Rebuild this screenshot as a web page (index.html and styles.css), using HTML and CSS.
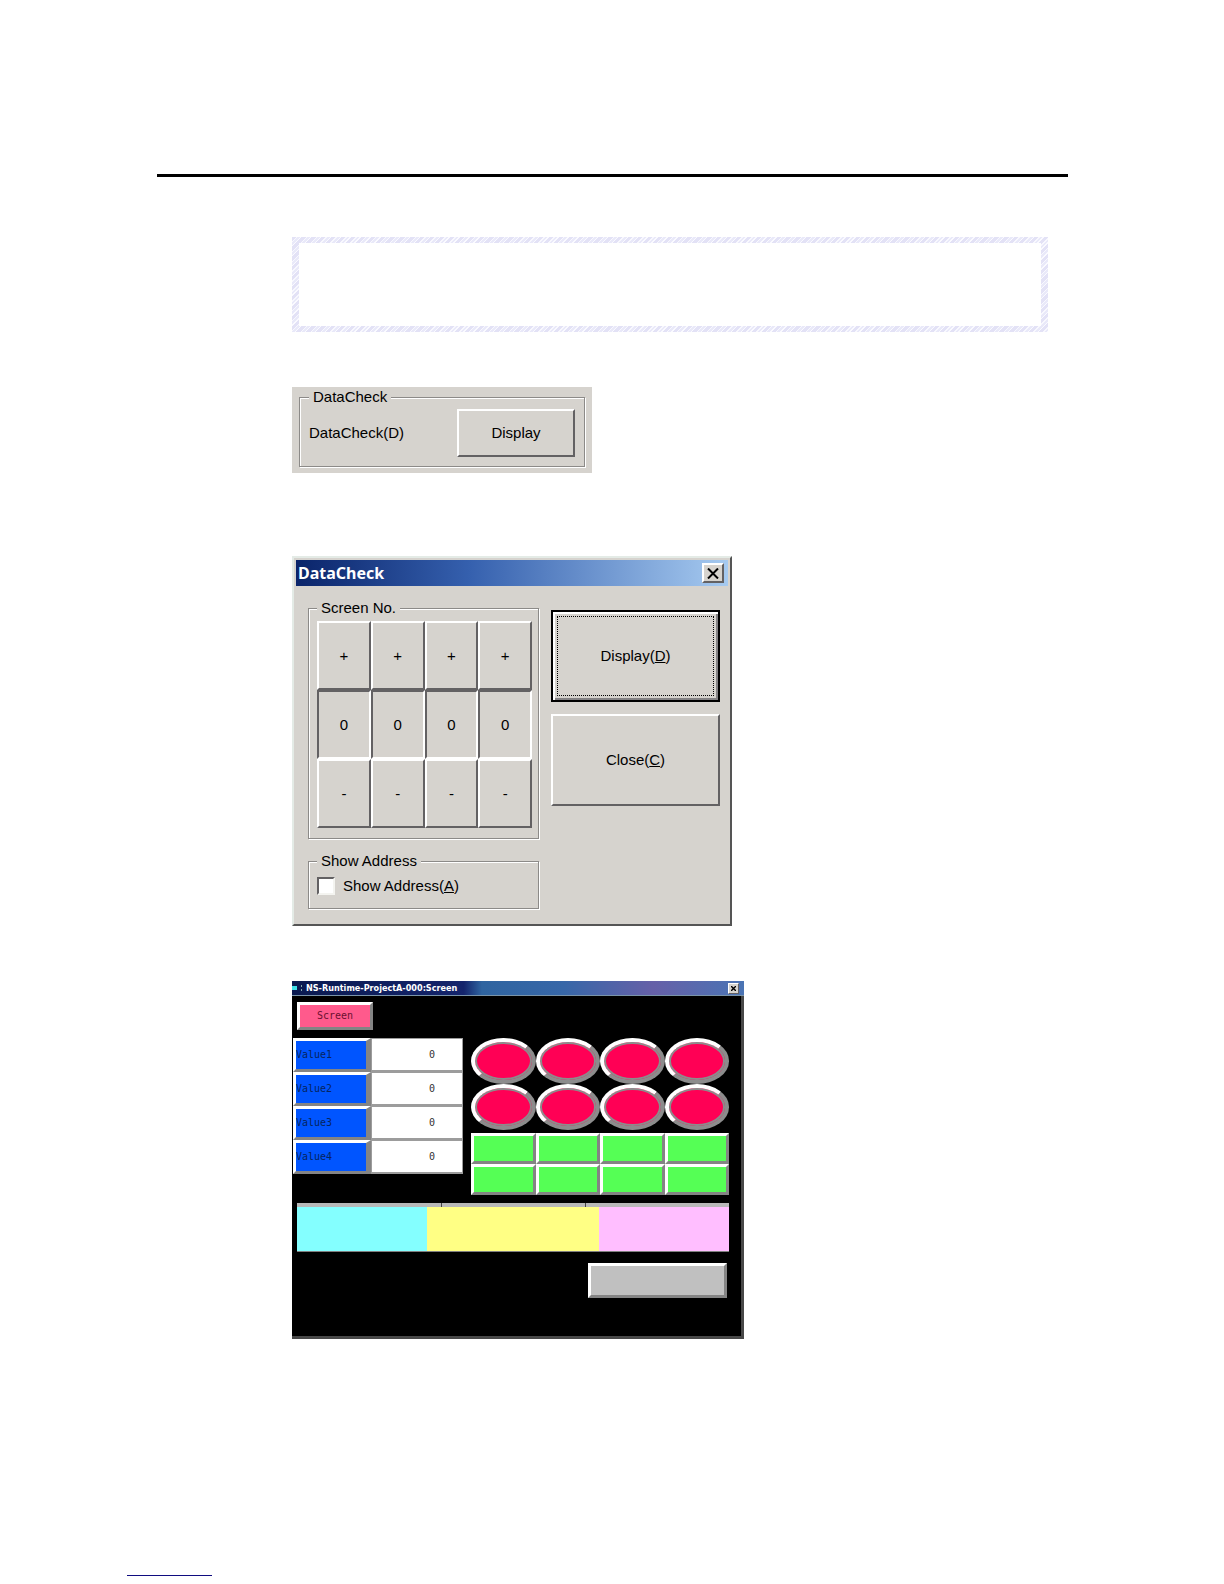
FILE: index.html
```
<!DOCTYPE html>
<html lang="en">
<head>
    <meta charset="UTF-8">
    <meta name="viewport" content="width=device-width, initial-scale=1.0">
    <title>DataCheck</title>
    <link rel="stylesheet" href="styles.css">
</head>
<body>
    <main class="page">
        <hr class="rule">
        <div class="content">
            <div class="note"><div class="note-inner"></div></div>

            <section class="panel">
                <fieldset class="group panel-group">
                    <legend>DataCheck</legend>
                    <label for="display">DataCheck(D)</label>
                    <button type="button" id="display" class="btn">Display</button>
                </fieldset>
            </section>

            <section class="dialog">
                <header class="dialog-title">
                    <h1>DataCheck</h1>
                    <button type="button" class="btn close" aria-label="Close">
                        <svg width="12" height="11" viewBox="0 0 12 11"><path d="M1 0.5L11 10.5M11 0.5L1 10.5" stroke="#000" stroke-width="2"/></svg>
                    </button>
                </header>
                <div class="dialog-body">
                    <div class="dialog-groups">
                        <fieldset class="group">
                            <legend>Screen No.</legend>
                            <div class="digits">
                                <button type="button" class="btn">+</button>
                                <button type="button" class="btn">+</button>
                                <button type="button" class="btn">+</button>
                                <button type="button" class="btn">+</button>
                                <output class="digit">0</output>
                                <output class="digit">0</output>
                                <output class="digit">0</output>
                                <output class="digit">0</output>
                                <button type="button" class="btn">-</button>
                                <button type="button" class="btn">-</button>
                                <button type="button" class="btn">-</button>
                                <button type="button" class="btn">-</button>
                            </div>
                        </fieldset>
                        <fieldset class="group">
                            <legend>Show Address</legend>
                            <div class="check">
                                <input type="checkbox" id="address">
                                <label for="address">Show Address(<u>A</u>)</label>
                            </div>
                        </fieldset>
                    </div>
                    <div class="dialog-actions">
                        <button type="button" class="btn default"><span>Display(<u>D</u>)</span></button>
                        <button type="button" class="btn"><span>Close(<u>C</u>)</span></button>
                    </div>
                </div>
            </section>

            <section class="runtime">
                <header class="runtime-title">
                    <svg width="14" height="8" viewBox="0 0 14 8"><path d="M0 2h5v4H0z" fill="#3fe0e8"/><path d="M9 1h1v2H9zM9 5h1v2H9z" fill="#8aa"/></svg>
                    <h2>NS-Runtime-ProjectA-000:Screen</h2>
                    <button type="button" class="btn close" aria-label="Close">
                        <svg width="5" height="5" viewBox="0 0 5 5"><path d="M0 0L5 5M5 0L0 5" stroke="#000" stroke-width="1.4"/></svg>
                    </button>
                </header>
                <div class="runtime-body">
                    <button type="button" class="key screen">Screen</button>
                    <div class="controls">
                        <div class="values">
                            <button type="button" class="key">Value1</button><output>0</output>
                            <button type="button" class="key">Value2</button><output>0</output>
                            <button type="button" class="key">Value3</button><output>0</output>
                            <button type="button" class="key">Value4</button><output>0</output>
                        </div>
                        <div>
                            <div class="lamps">
                                <button type="button" aria-label="Lamp 1"></button>
                                <button type="button" aria-label="Lamp 2"></button>
                                <button type="button" aria-label="Lamp 3"></button>
                                <button type="button" aria-label="Lamp 4"></button>
                                <button type="button" aria-label="Lamp 5"></button>
                                <button type="button" aria-label="Lamp 6"></button>
                                <button type="button" aria-label="Lamp 7"></button>
                                <button type="button" aria-label="Lamp 8"></button>
                            </div>
                            <div class="switches">
                                <button type="button" class="key" aria-label="Switch 1"></button>
                                <button type="button" class="key" aria-label="Switch 2"></button>
                                <button type="button" class="key" aria-label="Switch 3"></button>
                                <button type="button" class="key" aria-label="Switch 4"></button>
                                <button type="button" class="key" aria-label="Switch 5"></button>
                                <button type="button" class="key" aria-label="Switch 6"></button>
                                <button type="button" class="key" aria-label="Switch 7"></button>
                                <button type="button" class="key" aria-label="Switch 8"></button>
                            </div>
                        </div>
                    </div>
                    <div class="alarm">
                        <div class="alarm-head"><span></span><span></span><span></span></div>
                        <div class="alarm-row">
                            <div class="cyan"></div>
                            <div class="yellow"></div>
                            <div class="pink"></div>
                        </div>
                    </div>
                    <button type="button" class="key blank" aria-label="Function"></button>
                </div>
            </section>
        </div>
    </main>
    <footer class="footer">
        <a href="#" aria-label="Contents"></a>
    </footer>
</body>
</html>
```
FILE: styles.css
```
* {
    box-sizing: border-box;
}
body {
    margin: 0;
    background: #fff;
    color: #000;
    font-family: "Liberation Sans", Arial, sans-serif;
    font-size: 15px;
    line-height: 20px;
}
button {
    font: inherit;
    color: inherit;
    padding: 0;
    cursor: pointer;
}
.page {
    padding: 174px 156px 0 157px;
}
.rule {
    height: 3px;
    margin: 0;
    border: none;
    background: #000;
}
.content {
    padding: 60px 20px 0 135px;
}

/* hatched frame */
.note {
    padding: 6px 7px;
    background: repeating-linear-gradient(135deg, #e3e2f6 0 3px, #f8f8fe 3px 4px, #e9e9f9 4px 6px, #fafaff 6px 7px);
}
.note-inner {
    height: 83px;
    background: #fff;
}

/* bevelled desktop controls */
.btn {
    background: #d6d3ce;
    border: 2px solid;
    border-color: #fff #636163 #636163 #fff;
}
.group {
    min-width: 0;
    margin: 0;
    border: 1px solid #8c8a88;
    box-shadow: inset 1px 1px #fff, 1px 1px #fff;
    background: #d6d3ce;
}
.group legend {
    padding: 0 4px;
    background: #d6d3ce;
}
.panel {
    width: 300px;
    max-width: 100%;
    margin-top: 55px;
    padding: 0 7px 6px;
    background: #d6d3ce;
}
.panel-group {
    display: flex;
    align-items: center;
    justify-content: space-between;
    padding: 2px 9px 9px;
}
.panel-group .btn {
    width: 118px;
    height: 48px;
}

.dialog {
    width: 440px;
    max-width: 100%;
    margin-top: 83px;
    padding: 2px;
    background: #d6d3ce;
    border: 2px solid;
    border-color: #e4ebe6 #555 #555 #e4ebe6;
}
.dialog-title {
    display: flex;
    align-items: center;
    justify-content: space-between;
    height: 26px;
    padding: 0 4px 0 2px;
    color: #fff;
    background: linear-gradient(90deg, #0a246a, #3560ae 40%, #a6caf0);
}
.dialog-title h1 {
    margin: 0;
    font-family: "Noto Sans", "Open Sans", sans-serif;
    font-size: 16px;
    font-weight: 700;
}
.close {
    display: flex;
    align-items: center;
    justify-content: center;
}
.dialog-title .close {
    width: 22px;
    height: 20px;
}
.dialog-body {
    display: grid;
    grid-template-columns: 231fr 169fr;
    gap: 12px;
    padding: 12px 8px 13px 12px;
}
.dialog-groups {
    display: flex;
    flex-direction: column;
    gap: 12px;
}
.dialog-groups .group {
    padding: 3px 6px 10px 8px;
}
.digits {
    display: grid;
    grid-template-columns: repeat(4, 1fr);
    grid-auto-rows: 69px;
}
.digit {
    display: flex;
    align-items: center;
    justify-content: center;
    border: 2px solid;
    border-color: #636163 #fff #fff #636163;
}
.check {
    display: flex;
    align-items: center;
    gap: 8px;
    height: 24px;
}
.check input {
    appearance: none;
    width: 18px;
    height: 18px;
    margin: 0;
    background: #fff;
    border: 2px solid;
    border-color: #636163 #f4f4f0 #f4f4f0 #636163;
}
.check input:checked {
    background: #000;
}
.dialog-actions {
    display: flex;
    flex-direction: column;
    gap: 12px;
    padding-top: 12px;
}
.dialog-actions .btn {
    height: 92px;
}
.dialog-actions .default {
    border-color: #000;
    box-shadow: inset 2px 2px #fff, inset -2px -2px #848284;
    outline: 1px dotted #000;
    outline-offset: -7px;
}

/* panel runtime window */
.runtime {
    width: 452px;
    max-width: 100%;
    margin-top: 55px;
    background: #000;
    border: solid #484848;
    border-width: 0 3px 3px 0;
    font-family: "DejaVu Sans Mono", monospace;
    font-size: 10px;
    line-height: 12px;
}
.runtime-title {
    display: flex;
    align-items: center;
    height: 15px;
    margin-right: -3px;
    padding-right: 5px;
    color: #fff;
    background: linear-gradient(90deg, #0a1a50, #14246c 38%, #2f64a0 42%, #3767a8 60%, #6660a8 80%, #4a74b4);
    border-bottom: 1px solid #7a94a8;
}
.runtime-title h2 {
    flex: 1;
    margin: 0;
    font-family: "DejaVu Sans Condensed", "DejaVu Sans", sans-serif;
    font-size: 9px;
    font-weight: 700;
}
.runtime-title .close {
    width: 11px;
    height: 11px;
    border-width: 1px;
}
.runtime-body {
    display: flex;
    flex-direction: column;
    padding: 6px 12px 38px 1px;
}
.key {
    border: 3px solid;
    border-color: #fff #848484 #848484 #fff;
}
.screen {
    width: 76px;
    height: 28px;
    margin-left: 4px;
    background: #ff5a8c;
    color: #6b1030;
}
.controls {
    display: grid;
    grid-template-columns: 170fr 258fr;
    gap: 8px;
    margin-top: 8px;
}
.values {
    display: grid;
    grid-template-columns: 78fr 92fr;
    grid-auto-rows: 34px;
    align-content: start;
}
.values .key {
    background: #0055ff;
    color: #06245e;
    text-align: left;
    border-right-width: 5px;
}
.values output {
    display: flex;
    align-items: center;
    justify-content: flex-end;
    padding-right: 27px;
    background: #fff;
    border: solid #9c9c9c;
    border-width: 1px 1px 2px;
    color: #333;
}
.lamps,
.switches {
    display: grid;
    grid-template-columns: repeat(4, 1fr);
}
.lamps {
    grid-auto-rows: 46px;
}
.lamps button {
    background: #ff0055;
    border: 4px solid;
    border-color: #fff #8c8c8c #8c8c8c #fff;
    border-radius: 50%;
    box-shadow: inset 0 0 0 2px #8c8c8c;
}
.switches {
    grid-auto-rows: 31px;
    margin-top: 3px;
}
.switches .key {
    background: #55ff55;
}
.alarm {
    margin: 8px 0 0 4px;
    border-bottom: 1px solid #808080;
}
.alarm-head {
    display: grid;
    grid-template-columns: repeat(3, 1fr);
    height: 4px;
    background: #b8b8b8;
}
.alarm-head span + span {
    border-left: 1px solid #444;
}
.alarm-row {
    display: grid;
    grid-template-columns: 3fr 4fr 3fr;
    height: 44px;
}
.cyan {
    background: #84ffff;
}
.yellow {
    background: #ffff84;
}
.pink {
    background: #ffbeff;
}
.blank {
    align-self: flex-end;
    width: 139px;
    height: 35px;
    margin: 11px 2px 0 0;
    background: #c0c0c0;
}

.footer {
    padding: 222px 0 7px 127px;
}
.footer a {
    display: block;
    width: 85px;
    height: 15px;
    border-bottom: 1px solid #100c80;
}
```
